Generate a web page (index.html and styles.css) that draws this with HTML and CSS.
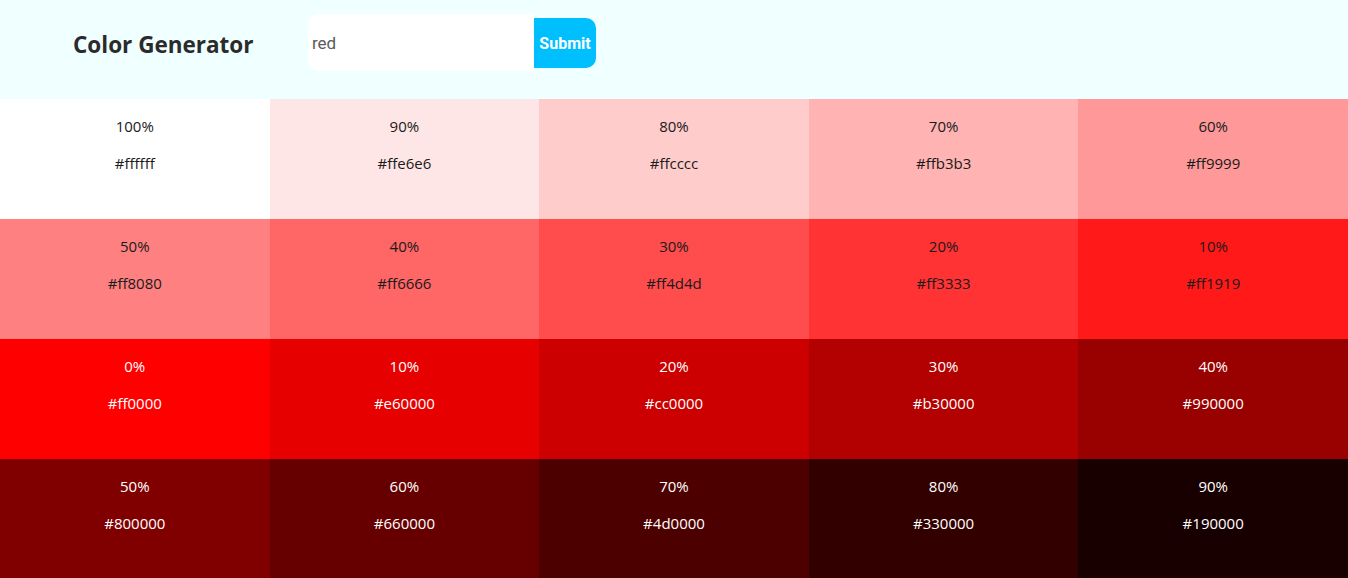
FILE: index.html
```html
<!DOCTYPE html>
<html lang="en">
<head>
<meta charset="utf-8">
<title>Color Generator</title>
<link rel="stylesheet" href="styles.css">
</head>
<body>
<header class="container">
  <h3 class="title">Color Generator</h3>
  <form class="form">
    <input class="field" type="text" value="red">
    <button class="btn" type="button">Submit</button>
  </form>
</header>
<section class="colors">
  <article class="color" style="background:#ffffff"><p class="pct">100%</p><p class="hex">#ffffff</p></article>
  <article class="color" style="background:#ffe6e6"><p class="pct">90%</p><p class="hex">#ffe6e6</p></article>
  <article class="color" style="background:#ffcccc"><p class="pct">80%</p><p class="hex">#ffcccc</p></article>
  <article class="color" style="background:#ffb3b3"><p class="pct">70%</p><p class="hex">#ffb3b3</p></article>
  <article class="color" style="background:#ff9999"><p class="pct">60%</p><p class="hex">#ff9999</p></article>
  <article class="color" style="background:#ff8080"><p class="pct">50%</p><p class="hex">#ff8080</p></article>
  <article class="color" style="background:#ff6666"><p class="pct">40%</p><p class="hex">#ff6666</p></article>
  <article class="color" style="background:#ff4d4d"><p class="pct">30%</p><p class="hex">#ff4d4d</p></article>
  <article class="color" style="background:#ff3333"><p class="pct">20%</p><p class="hex">#ff3333</p></article>
  <article class="color" style="background:#ff1919"><p class="pct">10%</p><p class="hex">#ff1919</p></article>
  <article class="color light" style="background:#ff0000"><p class="pct">0%</p><p class="hex">#ff0000</p></article>
  <article class="color light" style="background:#e60000"><p class="pct">10%</p><p class="hex">#e60000</p></article>
  <article class="color light" style="background:#cc0000"><p class="pct">20%</p><p class="hex">#cc0000</p></article>
  <article class="color light" style="background:#b30000"><p class="pct">30%</p><p class="hex">#b30000</p></article>
  <article class="color light" style="background:#990000"><p class="pct">40%</p><p class="hex">#990000</p></article>
  <article class="color light" style="background:#800000"><p class="pct">50%</p><p class="hex">#800000</p></article>
  <article class="color light" style="background:#660000"><p class="pct">60%</p><p class="hex">#660000</p></article>
  <article class="color light" style="background:#4d0000"><p class="pct">70%</p><p class="hex">#4d0000</p></article>
  <article class="color light" style="background:#330000"><p class="pct">80%</p><p class="hex">#330000</p></article>
  <article class="color light" style="background:#190000"><p class="pct">90%</p><p class="hex">#190000</p></article>
</section>
</body>
</html>
```
FILE: styles.css
```css
* { box-sizing: border-box; }
body {
  margin: 0;
  font-family: "Open Sans", "Noto Sans", sans-serif;
  color: #1a1a1a;
  background: #fff;
}
.container {
  height: 99px;
  background: #f0ffff;
  display: flex;
  align-items: flex-start;
  padding: 14px 0 0 73px;
}
.title {
  margin: 15px 0 0 0;
  width: 235px;
  font-size: 22.5px;
  font-weight: 700;
  color: #2b2b2b;
  line-height: 32px;
}
.form {
  display: flex;
  align-items: center;
}
.field {
  width: 226px;
  height: 57px;
  border: none;
  border-radius: 10px 0 0 10px;
  background: #fff;
  padding: 0 0 0 4px;
  font-family: Roboto, "Liberation Sans", sans-serif;
  font-size: 17px;
  color: #5a5a5a;
  outline: none;
  margin-bottom: 1px;
}
.btn {
  width: 62px;
  height: 50px;
  border: none;
  border-radius: 0 10px 10px 0;
  background: #00bfff;
  color: #fff;
  font-family: Roboto, "Liberation Sans", sans-serif;
  font-weight: 700;
  font-size: 16px;
  padding: 0;
}
.colors {
  display: grid;
  grid-template-columns: repeat(5, 1fr);
  grid-auto-rows: 120px;
}
.color {
  padding: 15px 8px 0;
  text-align: center;
  display: flex;
  flex-direction: column;
  gap: 13px;
  font-size: 15px;
}
.color p { margin: 0; line-height: 24px; }
.light { color: #fff; }
```
